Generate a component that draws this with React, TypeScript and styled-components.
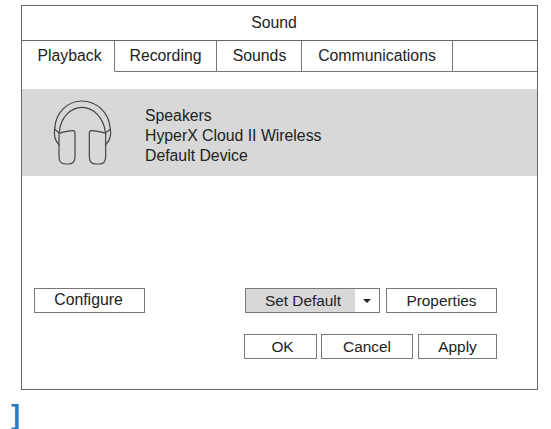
import React from 'react';
import styled, { createGlobalStyle } from 'styled-components';

const GlobalStyle = createGlobalStyle`
  html, body {
    margin: 0;
    padding: 0;
    background: #fff;
  }
  body {
    font-family: "Liberation Sans", Arial, sans-serif;
    font-size: 15.8px;
    color: #222;
    overflow: hidden;
  }
`;

const Page = styled.div`
  width: 551px;
  height: 429px;
  padding: 5px 0 0 21px;
  box-sizing: border-box;
  overflow: hidden;
`;

const Dialog = styled.div`
  width: 517px;
  height: 385px;
  box-sizing: border-box;
  border: 1px solid #666;
  display: flex;
  flex-direction: column;
`;

const TitleBar = styled.div`
  height: 35px;
  padding-right: 11px;
  box-sizing: border-box;
  border-bottom: 1px solid #666;
  display: flex;
  align-items: center;
  justify-content: center;
`;

const TabRow = styled.div`
  height: 31px;
  display: flex;
`;

const Tab = styled.div<{ $width: number; $active?: boolean; $shift?: number }>`
  width: ${(p) => p.$width}px;
  padding-left: ${(p) => p.$shift ?? 0}px;
  box-sizing: border-box;
  border-right: 1px solid #777;
  border-bottom: ${(p) => (p.$active ? '1px solid transparent' : '1px solid #777')};
  display: flex;
  align-items: center;
  justify-content: center;
`;

const TabFiller = styled.div`
  flex: 1;
  border-bottom: 1px solid #777;
`;

const DeviceRow = styled.div`
  margin-top: 17px;
  height: 87px;
  padding-left: 18px;
  background: #d8d8d8;
  display: flex;
  align-items: center;
  gap: 15px;
`;

const DeviceInfo = styled.div`
  margin-top: 7px;
  line-height: 20px;
`;

const ButtonRow = styled.div<{ $top: string }>`
  margin-top: ${(p) => p.$top};
  padding: 0 40px 0 12px;
  display: flex;
  justify-content: flex-end;
  font-size: 15.4px;
`;

const Button = styled.div<{ $width: number; $gap?: number; $shift?: number }>`
  width: ${(p) => p.$width}px;
  height: 25px;
  margin-left: ${(p) => p.$gap ?? 0}px;
  padding-left: ${(p) => p.$shift ?? 0}px;
  box-sizing: border-box;
  border: 1px solid #777;
  display: flex;
  align-items: center;
  justify-content: center;
`;

const ConfigureButton = styled(Button)`
  margin-right: auto;
  padding-right: 2px;
  padding-bottom: 1px;
  font-size: 15.8px;
`;

const SplitButton = styled.div`
  width: 135px;
  height: 25px;
  box-sizing: border-box;
  border: 1px solid #777;
  display: flex;
`;

const SplitMain = styled.div`
  width: 109px;
  padding-left: 5px;
  box-sizing: border-box;
  background: #d8d8d8;
  display: flex;
  align-items: center;
  justify-content: center;
`;

const SplitToggle = styled.div`
  flex: 1;
  display: flex;
  align-items: center;
  justify-content: center;
`;

const Caret = styled.span`
  width: 0;
  height: 0;
  border-left: 4px solid transparent;
  border-right: 4px solid transparent;
  border-top: 4px solid #222;
`;

const FooterRow = styled(ButtonRow)`
  padding-bottom: 30px;
`;

const Bracket = styled.div`
  margin: 10px 0 0 -10px;
  font-size: 27px;
  font-weight: 700;
  line-height: 31px;
  color: #2a7cbc;
`;

const Headphones = () => (
  <svg width="90" height="85" viewBox="0 0 270 255" fill="none" stroke="#444" strokeWidth="3.6" strokeLinecap="round" strokeLinejoin="round">
    <path d="M44 118C46 66 84 33 126 33C168 33 208 66 211 118" />
    <path d="M58 126C62 82 92 52 126 52C160 52 190 82 196 126" />
    <path d="M44 118L57 128M211 118L197 128" />
    <path d="M44 118C41 132 44 152 57 164M211 118C214 132 211 152 197 164" />
    <path d="M57 130C70 126 88 122 100 122C104 122 105 126 105 132L105 200C105 214 98 222 84 222L76 222C64 222 57 214 57 200Z" />
    <path d="M197 130C184 126 166 122 154 122C150 122 148 126 148 132L148 200C148 214 155 222 169 222L177 222C189 222 197 214 197 200Z" />
  </svg>
);

export default function App() {
  return (
    <Page>
      <GlobalStyle />
      <Dialog>
        <TitleBar>Sound</TitleBar>
        <TabRow>
          <Tab $width={93} $active $shift={3}>Playback</Tab>
          <Tab $width={102}>Recording</Tab>
          <Tab $width={85} $shift={1}>Sounds</Tab>
          <Tab $width={151}>Communications</Tab>
          <TabFiller />
        </TabRow>
        <DeviceRow>
          <Headphones />
          <DeviceInfo>
            <div>Speakers</div>
            <div>HyperX Cloud II Wireless</div>
            <div>Default Device</div>
          </DeviceInfo>
        </DeviceRow>
        <ButtonRow $top="auto">
          <ConfigureButton $width={111}>Configure</ConfigureButton>
          <SplitButton>
            <SplitMain>Set Default</SplitMain>
            <SplitToggle><Caret /></SplitToggle>
          </SplitButton>
          <Button $width={111} $gap={6}>Properties</Button>
        </ButtonRow>
        <FooterRow $top="21px">
          <Button $width={73} $shift={4}>OK</Button>
          <Button $width={92} $gap={4}>Cancel</Button>
          <Button $width={79} $gap={5}>Apply</Button>
        </FooterRow>
      </Dialog>
      <Bracket>]</Bracket>
    </Page>
  );
}
